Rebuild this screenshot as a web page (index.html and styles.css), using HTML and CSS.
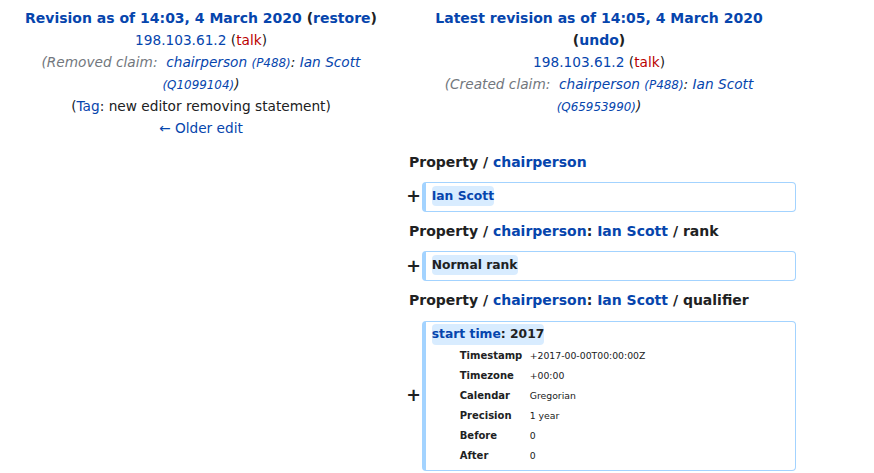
FILE: index.html
```html
<!DOCTYPE html>
<html lang="en">
<head>
<meta charset="utf-8">
<title>Difference between revisions</title>
<link rel="stylesheet" href="styles.css">
</head>
<body>
<table class="diff">
  <colgroup>
    <col class="col-marker"><col class="col-content"><col class="col-marker"><col class="col-content">
  </colgroup>
  <tr>
    <td colspan="2" class="title">
      <div><strong><a class="link">Revision as of 14:03, 4 March 2020</a> (<a class="link">restore</a>)</strong></div>
      <div><a class="link">198.103.61.2</a> (<a class="new">talk</a>)</div>
      <div><span class="comment"><span class="autocomment">(Removed claim:&nbsp; </span><a class="link">chairperson <span class="eid">(P488)</span></a>: <a class="link">Ian Scott <span class="eid">(Q1099104)</span></a>)</span></div>
      <div>(<a class="link">Tag</a>: new editor removing statement)</div>
      <div><a class="link">← Older edit</a></div>
    </td>
    <td colspan="2" class="title">
      <div><strong><a class="link">Latest revision as of 14:05, 4 March 2020</a> (<a class="link">undo</a>)</strong></div>
      <div><a class="link">198.103.61.2</a> (<a class="new">talk</a>)</div>
      <div><span class="comment"><span class="autocomment">(Created claim:&nbsp; </span><a class="link">chairperson <span class="eid">(P488)</span></a>: <a class="link">Ian Scott <span class="eid">(Q65953990)</span></a>)</span></div>
    </td>
  </tr>
  <tr>
    <td colspan="2" class="lineno"></td>
    <td colspan="2" class="lineno">Property / <a class="link">chairperson</a></td>
  </tr>
  <tr>
    <td colspan="2" class="empty"></td>
    <td class="marker">+</td>
    <td class="added"><div><span class="change"><a class="link">Ian Scott</a></span></div></td>
  </tr>
  <tr>
    <td colspan="2" class="lineno"></td>
    <td colspan="2" class="lineno">Property / <a class="link">chairperson</a>: <a class="link">Ian Scott</a> / rank</td>
  </tr>
  <tr>
    <td colspan="2" class="empty"></td>
    <td class="marker">+</td>
    <td class="added"><div><span class="change">Normal rank</span></div></td>
  </tr>
  <tr>
    <td colspan="2" class="lineno"></td>
    <td colspan="2" class="lineno">Property / <a class="link">chairperson</a>: <a class="link">Ian Scott</a> / qualifier</td>
  </tr>
  <tr>
    <td colspan="2" class="empty"></td>
    <td class="marker">+</td>
    <td class="added">
      <div><span class="change"><a class="link">start time</a>: 2017</span></div>
      <div class="details">
        <span class="key">Timestamp</span><span class="val">+2017-00-00T00:00:00Z</span>
        <span class="key">Timezone</span><span class="val">+00:00</span>
        <span class="key">Calendar</span><span class="val">Gregorian</span>
        <span class="key">Precision</span><span class="val">1 year</span>
        <span class="key">Before</span><span class="val">0</span>
        <span class="key">After</span><span class="val">0</span>
      </div>
    </td>
  </tr>
</table>
</body>
</html>
```

FILE: styles.css
```css
html, body {
  margin: 0;
  padding: 0;
  background: #ffffff;
}

body {
  font-family: "DejaVu Sans", "Noto Sans", sans-serif;
  font-size: 14px;
  color: #202122;
}

.diff {
  width: 800px;
  border-spacing: 4px;
  border-collapse: separate;
  table-layout: fixed;
  margin: 0;
}

.col-marker { width: 2%; }
.col-content { width: 48%; }

.diff td {
  padding: 4.62px 7px;
}

.link { color: #0645ad; text-decoration: none; }
.new { color: #ba0000; text-decoration: none; }

.diff td.title {
  text-align: center;
  vertical-align: top;
  font-size: 13.7px;
  line-height: 21.9px;
  padding-top: 4.2px;
  padding-bottom: 2.5px;
}

.title strong { font-size: 14px; }

.comment { font-style: italic; }
.autocomment { color: #72777d; }
.eid { font-size: 0.87em; line-height: 1; }

.diff td.lineno {
  font-weight: bold;
  line-height: 22.4px;
}

.diff td.marker {
  font-size: 17.5px;
  font-weight: bold;
  line-height: 1.2;
  text-align: right;
  padding: 4.375px;
  vertical-align: middle;
}

.diff td.added {
  font-size: 12.32px;
  line-height: 18.5px;
  vertical-align: top;
  padding: 4.07px 6.16px;
  border-style: solid;
  border-color: #a3d3ff;
  border-width: 1px 1px 1px 4px;
  border-radius: 0.33em;
}

.change {
  font-weight: bold;
  background: #d8ecff;
  border-radius: 0.33em;
  padding: 0.25em 0;
}

.details {
  display: grid;
  grid-template-columns: 70px auto;
  grid-auto-rows: 20px;
  align-items: center;
  margin: 1.5px 0 0 28px;
  font-size: 10px;
  line-height: 20px;
}

.key { font-weight: bold; }
.val { font-size: 9.3px; }
```
